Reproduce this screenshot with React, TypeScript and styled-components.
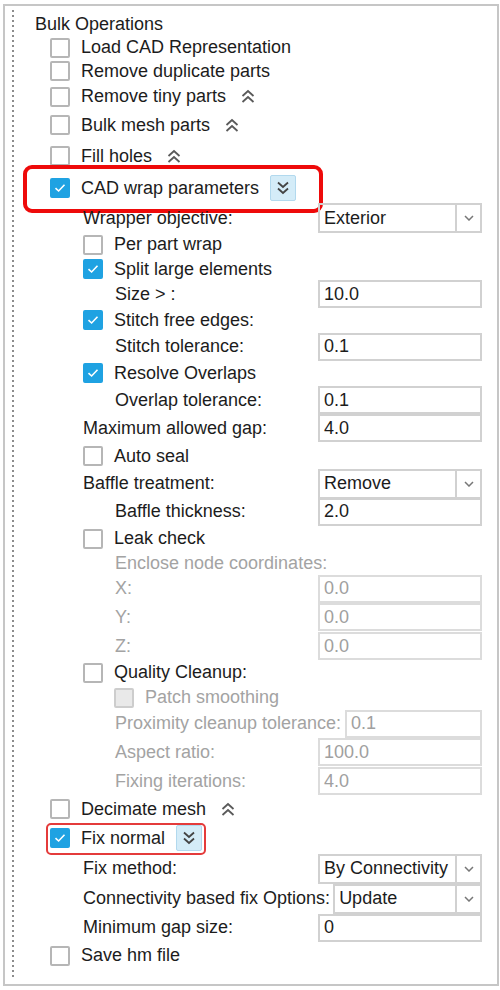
import styled, { createGlobalStyle } from "styled-components";

const GlobalStyle = createGlobalStyle`
  html, body {
    margin: 0;
    padding: 0;
    background: #ffffff;
  }
  body {
    font-family: "Liberation Sans", Arial, sans-serif;
    color: #1c1c1c;
  }
`;

const Frame = styled.div`
  box-sizing: border-box;
  width: 496px;
  height: 982px;
  margin: 4px 0 0 3px;
  border: 2px solid #c6c6c6;
  display: flex;
`;

// dotted tree guide on the left
const Guide = styled.div`
  width: 2px;
  margin: 4px 0 6px 7px;
  background-image: linear-gradient(to bottom, #8c8c8c 2px, transparent 2px);
  background-size: 2px 5px;
`;

const Tree = styled.div`
  flex: 1;
  padding: 7px 15px 0 0;
  display: flex;
  flex-direction: column;
`;

const Row = styled.div<{ $h: number; $indent: number }>`
  position: relative;
  display: flex;
  align-items: center;
  height: ${(p) => p.$h}px;
  padding-left: ${(p) => p.$indent}px;
  font-size: 18px;
  white-space: nowrap;
`;

const Label = styled.span<{ $muted?: boolean }>`
  color: ${(p) => (p.$muted ? "#a3a3a3" : "#1c1c1c")};
`;

const Box = styled.span<{ $checked?: boolean; $disabled?: boolean }>`
  box-sizing: border-box;
  flex: 0 0 20px;
  width: 20px;
  height: 20px;
  margin-right: 11px;
  border-radius: 2px;
  display: flex;
  align-items: center;
  justify-content: center;
  border: 2px solid
    ${(p) => (p.$checked ? "#1fa2e2" : p.$disabled ? "#cdcdcd" : "#b6b6b6")};
  background: ${(p) =>
    p.$checked ? "#1fa2e2" : p.$disabled ? "#e9e9e9" : "#ffffff"};
`;

const Collapse = styled.svg`
  margin-left: 15px;
  flex: 0 0 auto;
`;

const ExpandButton = styled.span`
  box-sizing: border-box;
  width: 26px;
  height: 26px;
  margin-left: 11px;
  border: 1px solid #b2d9ee;
  border-radius: 2px;
  background: #d4ecf8;
  display: flex;
  align-items: center;
  justify-content: center;
`;

const Callout = styled.div<{ $thin?: boolean }>`
  position: absolute;
  box-sizing: border-box;
  pointer-events: none;
  border: ${(p) => (p.$thin ? "2px solid #e43b3b" : "4px solid #ee0a0a")};
  border-radius: ${(p) => (p.$thin ? 5 : 9)}px;
`;

const Field = styled.div<{ $fill?: boolean; $off?: boolean }>`
  box-sizing: border-box;
  height: 28px;
  flex: ${(p) => (p.$fill ? "1 1 auto" : "0 0 164px")};
  margin-left: ${(p) => (p.$fill ? "4px" : "auto")};
  padding-left: 4px;
  border: 2px solid ${(p) => (p.$off ? "#dcdcdc" : "#d1d1d1")};
  background: #ffffff;
  display: flex;
  align-items: center;
  color: ${(p) => (p.$off ? "#a0a0a0" : "#1c1c1c")};
`;

const SelectBox = styled.div<{ $fill?: boolean }>`
  height: 30px;
  flex: ${(p) => (p.$fill ? "1 1 auto" : "0 0 164px")};
  margin-left: ${(p) => (p.$fill ? "3px" : "auto")};
  display: flex;
`;

const SelectValue = styled.div`
  box-sizing: border-box;
  flex: 1;
  padding-left: 4px;
  border: 2px solid #d1d1d1;
  display: flex;
  align-items: center;
`;

const DropButton = styled.div`
  box-sizing: border-box;
  width: 25px;
  border: 2px solid #d1d1d1;
  border-left: none;
  display: flex;
  align-items: center;
  justify-content: center;
`;

const Check = () => (
  <svg width="14" height="14" viewBox="0 0 14 14">
    <polyline
      points="2.5,7.2 5.6,10 11.5,3.8"
      fill="none"
      stroke="#ffffff"
      strokeWidth="1.6"
    />
  </svg>
);

const ChevronsUp = () => (
  <Collapse width="14" height="15" viewBox="0 0 14 15">
    <g fill="none" stroke="#5a5a5a" strokeWidth="1.8">
      <polyline points="1.5,7 7,2 12.5,7" />
      <polyline points="1.5,13 7,8 12.5,13" />
    </g>
  </Collapse>
);

const ChevronsDown = () => (
  <svg width="14" height="16" viewBox="0 0 14 16">
    <g fill="none" stroke="#444444" strokeWidth="1.8">
      <polyline points="2,2.5 7,7 12,2.5" />
      <polyline points="2,8.5 7,13 12,8.5" />
    </g>
  </svg>
);

const Select = ({ value, fill }: { value: string; fill?: boolean }) => (
  <SelectBox $fill={fill}>
    <SelectValue>{value}</SelectValue>
    <DropButton>
      <svg width="10" height="6" viewBox="0 0 10 6">
        <polyline
          points="1,1 5,5 9,1"
          fill="none"
          stroke="#777777"
          strokeWidth="1.5"
        />
      </svg>
    </DropButton>
  </SelectBox>
);

interface CheckRowProps {
  h: number;
  indent: number;
  label: string;
  checked?: boolean;
  disabled?: boolean;
  children?: React.ReactNode;
}

const CheckRow = ({ h, indent, label, checked, disabled, children }: CheckRowProps) => (
  <Row $h={h} $indent={indent}>
    <Box $checked={checked} $disabled={disabled}>
      {checked && <Check />}
    </Box>
    <Label $muted={disabled}>{label}</Label>
    {children}
  </Row>
);

const App = () => {
  return (
    <>
      <GlobalStyle />
      <Frame>
        <Guide />
        <Tree>
          <Row $h={23} $indent={21}>
            <Label>Bulk Operations</Label>
          </Row>
          <CheckRow h={23} indent={36} label="Load CAD Representation" />
          <CheckRow h={24} indent={36} label="Remove duplicate parts" />
          <CheckRow h={27} indent={36} label="Remove tiny parts">
            <ChevronsUp />
          </CheckRow>
          <CheckRow h={30} indent={36} label="Bulk mesh parts">
            <ChevronsUp />
          </CheckRow>
          <CheckRow h={32} indent={36} label="Fill holes">
            <ChevronsUp />
          </CheckRow>
          <CheckRow h={32} indent={36} label="CAD wrap parameters" checked>
            <ExpandButton>
              <ChevronsDown />
            </ExpandButton>
            <Callout style={{ left: 9, top: -7, width: 300, height: 48 }} />
          </CheckRow>

          <Row $h={28} $indent={69}>
            <Label>Wrapper objective:</Label>
            <Select value="Exterior" />
          </Row>
          <CheckRow h={25} indent={69} label="Per part wrap" />
          <CheckRow h={24} indent={69} label="Split large elements" checked />
          <Row $h={26} $indent={101}>
            <Label>Size &gt; :</Label>
            <Field>10.0</Field>
          </Row>
          <CheckRow h={26} indent={69} label="Stitch free edges:" checked />
          <Row $h={27} $indent={101}>
            <Label>Stitch tolerance:</Label>
            <Field>0.1</Field>
          </Row>
          <CheckRow h={26} indent={69} label="Resolve Overlaps" checked />
          <Row $h={28} $indent={101}>
            <Label>Overlap tolerance:</Label>
            <Field>0.1</Field>
          </Row>
          <Row $h={28} $indent={69}>
            <Label>Maximum allowed gap:</Label>
            <Field>4.0</Field>
          </Row>
          <CheckRow h={28} indent={69} label="Auto seal" />
          <Row $h={27} $indent={69}>
            <Label>Baffle treatment:</Label>
            <Select value="Remove" />
          </Row>
          <Row $h={29} $indent={101}>
            <Label>Baffle thickness:</Label>
            <Field>2.0</Field>
          </Row>
          <CheckRow h={25} indent={69} label="Leak check" />
          <Row $h={24} $indent={101}>
            <Label $muted>Enclose node coordinates:</Label>
          </Row>
          <Row $h={27} $indent={101}>
            <Label $muted>X:</Label>
            <Field $off>0.0</Field>
          </Row>
          <Row $h={30} $indent={101}>
            <Label $muted>Y:</Label>
            <Field $off>0.0</Field>
          </Row>
          <Row $h={28} $indent={101}>
            <Label $muted>Z:</Label>
            <Field $off>0.0</Field>
          </Row>
          <CheckRow h={25} indent={69} label="Quality Cleanup:" />
          <CheckRow h={25} indent={100} label="Patch smoothing" disabled />
          <Row $h={27} $indent={101}>
            <Label $muted>Proximity cleanup tolerance:</Label>
            <Field $off $fill>
              0.1
            </Field>
          </Row>
          <Row $h={30} $indent={101}>
            <Label $muted>Aspect ratio:</Label>
            <Field $off>100.0</Field>
          </Row>
          <Row $h={28} $indent={101}>
            <Label $muted>Fixing iterations:</Label>
            <Field $off>4.0</Field>
          </Row>

          <CheckRow h={28} indent={36} label="Decimate mesh">
            <ChevronsUp />
          </CheckRow>
          <CheckRow h={30} indent={36} label="Fix normal" checked>
            <ExpandButton>
              <ChevronsDown />
            </ExpandButton>
            <Callout $thin style={{ left: 32, top: 0, width: 160, height: 32 }} />
          </CheckRow>
          <Row $h={31} $indent={69}>
            <Label>Fix method:</Label>
            <Select value="By Connectivity" />
          </Row>
          <Row $h={29} $indent={69}>
            <Label>Connectivity based fix Options:</Label>
            <Select value="Update" fill />
          </Row>
          <Row $h={29} $indent={69}>
            <Label>Minimum gap size:</Label>
            <Field>0</Field>
          </Row>
          <CheckRow h={27} indent={36} label="Save hm file" />
        </Tree>
      </Frame>
    </>
  );
};

export default App;
